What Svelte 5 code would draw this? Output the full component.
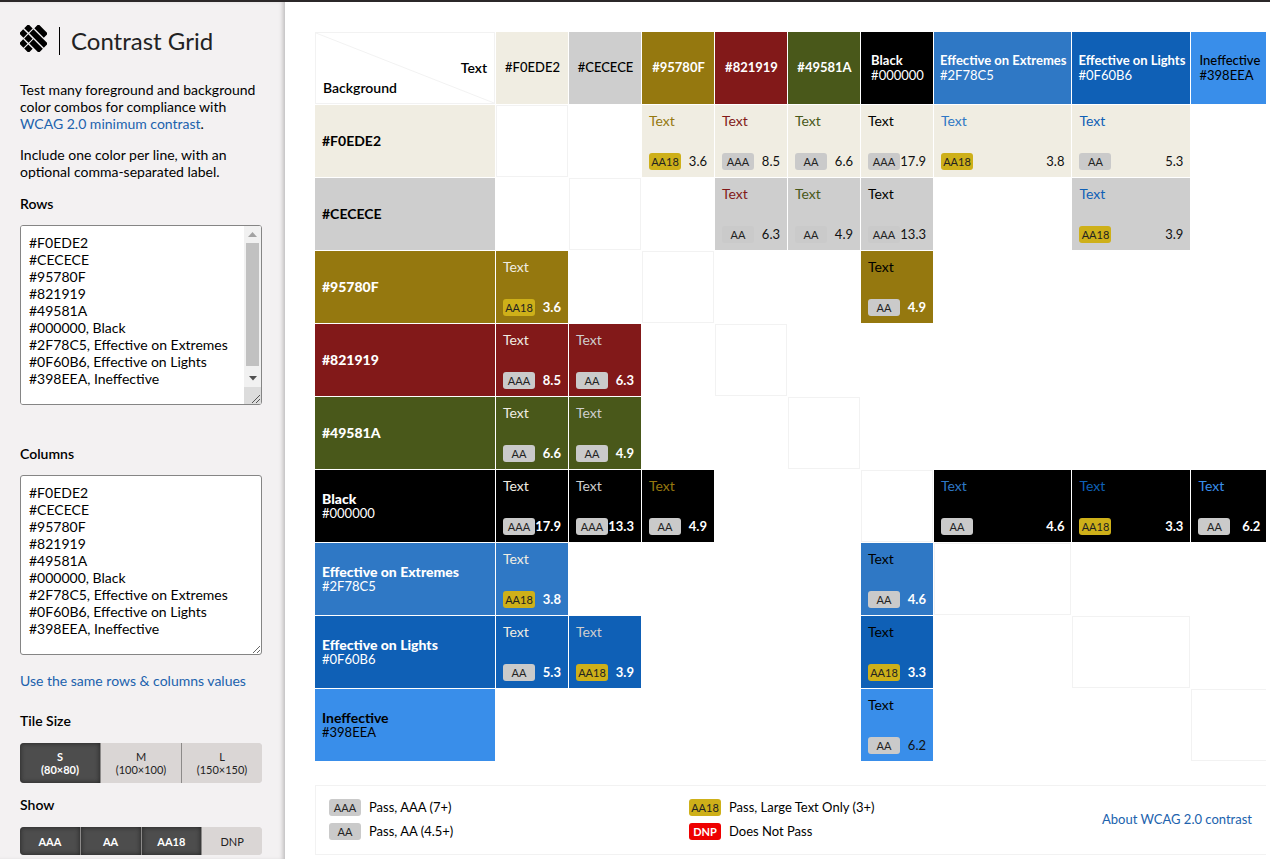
<script>
  const colors = [
    { hex: '#F0EDE2', dark: false },
    { hex: '#CECECE', dark: false },
    { hex: '#95780F', dark: true },
    { hex: '#821919', dark: true },
    { hex: '#49581A', dark: true },
    { hex: '#000000', label: 'Black', dark: true },
    { hex: '#2F78C5', label: 'Effective on Extremes', dark: true },
    { hex: '#0F60B6', label: 'Effective on Lights', dark: true },
    { hex: '#398EEA', label: 'Ineffective', dark: false }
  ];

  const source = colors.map((c) => (c.label ? `${c.hex}, ${c.label}` : c.hex)).join('\n');
  let rowsText = $state(source + '\n');
  let columnsText = $state(source);

  function luminance(hex) {
    const [r, g, b] = [1, 3, 5].map((i) => {
      const v = parseInt(hex.slice(i, i + 2), 16) / 255;
      return v <= 0.03928 ? v / 12.92 : ((v + 0.055) / 1.055) ** 2.4;
    });
    return 0.2126 * r + 0.7152 * g + 0.0722 * b;
  }

  function contrast(a, b) {
    const [hi, lo] = [luminance(a), luminance(b)].sort((x, y) => y - x);
    return Math.floor(((hi + 0.05) / (lo + 0.05)) * 10) / 10;
  }

  function grade(ratio) {
    if (ratio >= 7) return 'AAA';
    if (ratio >= 4.5) return 'AA';
    if (ratio >= 3) return 'AA18';
    return 'DNP';
  }

  const grid = colors.map((bg) => ({
    bg,
    cells: colors.map((fg) => {
      const ratio = contrast(bg.hex, fg.hex);
      return { fg, ratio, grade: grade(ratio), same: fg === bg };
    })
  }));

  const sizes = [
    { name: 'S', dims: '(80×80)' },
    { name: 'M', dims: '(100×100)' },
    { name: 'L', dims: '(150×150)' }
  ];
  let size = $state('S');
  let shown = $state({ AAA: true, AA: true, AA18: true, DNP: false });
</script>

<div class="page">
  <aside class="sidebar">
    <header class="brand">
      <svg class="logo" viewBox="0 0 28 28" aria-hidden="true">
        <path
          d="M6.5 1.2l4.5 4.5M1.2 6.5l4.5 4.5M6.5 11.8l4.5 4.5M1.2 17l4.5 4.5M6.5 22.3l4.5 4.5M17 1.2l9.8 9.8M11.8 6.5l15 15M11.8 17l9.8 9.8"
        />
      </svg>
      <h1>Contrast Grid</h1>
    </header>

    <p>
      Test many foreground and background color combos for compliance with
      <a href="#wcag">WCAG 2.0 minimum contrast</a>.
    </p>
    <p>Include one color per line, with an optional comma-separated label.</p>

    <label class="heading rows" for="rows">Rows</label>
    <div class="scroll-box">
      <textarea id="rows" spellcheck="false" bind:value={rowsText}></textarea>
      <div class="scrollbar" aria-hidden="true">
        <svg viewBox="0 0 17 17"><path class="up" d="M4 11l4.500-5 4.500 5z" /></svg>
        <div class="thumb"></div>
        <svg viewBox="0 0 17 17"><path d="M5 6h8l-4 4.500z" /></svg>
        <svg class="grip" viewBox="0 0 17 17"><path d="M8 16l8-8M12 16l4-4" /></svg>
      </div>
    </div>

    <label class="heading columns" for="columns">Columns</label>
    <textarea id="columns" spellcheck="false" bind:value={columnsText}></textarea>

    <a class="same" href="#same">Use the same rows &amp; columns values</a>

    <fieldset>
      <legend class="heading">Tile Size</legend>
      <div class="segments">
        {#each sizes as s}
          <button type="button" class:on={size === s.name} aria-pressed={size === s.name} onclick={() => (size = s.name)}>
            {s.name}<br />{s.dims}
          </button>
        {/each}
      </div>
    </fieldset>

    <fieldset>
      <legend class="heading">Show</legend>
      <div class="segments low">
        {#each Object.keys(shown) as key}
          <button type="button" class:on={shown[key]} aria-pressed={shown[key]} onclick={() => (shown[key] = !shown[key])}>{key}</button>
        {/each}
      </div>
    </fieldset>
  </aside>

  <main>
    <table>
      <thead>
        <tr>
          <td class="corner">
            <svg viewBox="0 0 180 72" preserveAspectRatio="none" aria-hidden="true"><line x1="0" y1="0" x2="180" y2="72" /></svg>
            <div class="axis text">Text</div>
            <div class="axis">Background</div>
          </td>
          {#each colors as c}
            <th scope="col" class:dark={c.dark} style="background:{c.hex}">
              <div class="name">
                {#if c.label}<strong>{c.label}</strong><span>{c.hex}</span>{:else}<strong>{c.hex}</strong>{/if}
              </div>
            </th>
          {/each}
        </tr>
      </thead>
      <tbody>
        {#each grid as row}
          <tr>
            <th scope="row" class:dark={row.bg.dark} style="background:{row.bg.hex}">
              {#if row.bg.label}<strong>{row.bg.label}</strong><span>{row.bg.hex}</span>{:else}<strong>{row.bg.hex}</strong>{/if}
            </th>
            {#each row.cells as cell}
              {#if cell.same}
                <td class="same-color"></td>
              {:else if shown[cell.grade]}
                <td style="background:{row.bg.hex}">
                  <div class="tile">
                    <div style="color:{cell.fg.hex}">Text</div>
                    <div class="result" class:dark={row.bg.dark}>
                      <span class="badge {cell.grade}">{cell.grade}</span>
                      <span>{cell.ratio.toFixed(1)}</span>
                    </div>
                  </div>
                </td>
              {:else}
                <td></td>
              {/if}
            {/each}
          </tr>
        {/each}
      </tbody>
    </table>

    <footer>
      <ul>
        <li><span class="badge AAA">AAA</span>Pass, AAA (7+)</li>
        <li><span class="badge AA18">AA18</span>Pass, Large Text Only (3+)</li>
        <li><span class="badge AA">AA</span>Pass, AA (4.5+)</li>
        <li><span class="badge DNP">DNP</span>Does Not Pass</li>
      </ul>
      <a href="#about">About WCAG 2.0 contrast</a>
    </footer>
  </main>
</div>

<style>
  :global(body) {
    margin: 0;
    overflow: hidden;
  }

  .page {
    display: flex;
    box-sizing: border-box;
    height: 100vh;
    overflow: hidden;
    border-top: 2px solid #2b2829;
    background: #fff;
    color: #000;
    font: 14px/17px Lato, sans-serif;
  }

  a {
    color: #2062ad;
    text-decoration: none;
  }

  .sidebar {
    flex: none;
    box-sizing: border-box;
    width: 285px;
    padding: 23px 23px 0 20px;
    overflow: hidden;
    background: #f3f1f2;
    box-shadow: inset -4px 0 4px -2px #bdbbbc;
  }

  .brand {
    display: flex;
    gap: 12px;
    height: 56px;
  }

  .logo {
    flex: none;
    width: 27px;
    height: 27px;
  }

  .logo path {
    stroke: #000;
    stroke-width: 6;
  }

  h1 {
    align-self: flex-start;
    margin: 2px 0 0;
    padding-left: 11px;
    border-left: 1px solid #000;
    color: #222;
    font-size: 24px;
    font-weight: 400;
    line-height: 28px;
  }

  p {
    margin: 0 0 14px;
  }

  .heading {
    display: block;
    padding: 0;
    margin-bottom: 12px;
    font-weight: 600;
    line-height: 18px;
  }

  .heading.rows {
    margin-top: 15px;
  }

  .heading.columns {
    margin-top: 40px;
  }

  legend.heading {
    margin-bottom: 13px;
  }

  textarea {
    display: block;
    box-sizing: border-box;
    width: 100%;
    height: 180px;
    padding: 8px;
    border: 1px solid #858585;
    border-radius: 3px;
    background: #fff;
    color: #000;
    font: 14px/17px Lato, sans-serif;
    resize: both;
  }

  .scroll-box {
    position: relative;
  }

  .scrollbar {
    position: absolute;
    inset: 1px 1px 1px auto;
    display: flex;
    flex-direction: column;
    width: 17px;
    background: #f1f1f1;
    border-radius: 0 2px 2px 0;
    overflow: hidden;
    pointer-events: none;
  }

  .scrollbar svg {
    flex: none;
    width: 17px;
    height: 17px;
    fill: #505050;
  }

  .scrollbar .up {
    fill: #a3a3a3;
  }

  .scrollbar .grip {
    background: #dcdcdc;
    stroke: #555;
    stroke-width: 1;
  }

  .thumb {
    flex: 1;
    margin: 0 2px 4px;
    background: #c1c1c1;
  }

  .same {
    display: block;
    margin: 17px 0 23px;
  }

  fieldset {
    min-width: 0;
    margin: 0 0 13px;
    padding: 0;
    border: 0;
  }

  .segments {
    display: flex;
    overflow: hidden;
    border-radius: 4px;
    background: #dad6d5;
  }

  .segments button {
    flex: 1 1 0;
    height: 40px;
    padding: 0;
    border: 0;
    border-right: 1px solid #8c8a89;
    background: #dad6d5;
    color: #222;
    font: 11px/13px Lato, sans-serif;
  }

  .segments.low button {
    height: 28px;
  }

  .segments button:last-child {
    border-right: 0;
  }

  .segments button.on {
    background: #4d4d4d;
    color: #fff;
    font-weight: 700;
    box-shadow: inset 0 0 5px #222;
  }

  main {
    flex: 1;
    min-width: 0;
    margin: 30px 4px 0 30px;
    overflow: hidden;
    font-size: 13px;
  }

  table {
    margin: -1px;
    border-spacing: 1px;
    line-height: 15px;
  }

  td,
  th {
    box-sizing: border-box;
    min-width: 72px;
    height: 72px;
    padding: 0 7px;
    text-align: left;
    font-weight: 400;
    white-space: nowrap;
  }

  th:last-child,
  td:last-child {
    min-width: 76px;
  }

  th[scope='row'],
  .corner {
    width: 180px;
    min-width: 180px;
  }

  tbody th {
    padding-bottom: 1px;
  }

  thead th {
    padding: 0 5px 1px 6px;
    text-align: center;
  }

  .name {
    display: inline-block;
    text-align: left;
    vertical-align: top;
  }

  th strong,
  th span {
    display: block;
  }

  th strong {
    font-weight: 500;
  }

  th.dark strong {
    font-weight: 700;
  }

  tbody th strong {
    font-size: 14px;
    font-weight: 700;
  }

  tbody th.dark strong {
    font-weight: 900;
  }

  .dark {
    color: #fff;
  }

  .corner {
    position: relative;
    padding-bottom: 5px;
    border: 1px solid #f2f2f2;
    font-size: 14px;
    font-weight: 600;
    line-height: 20px;
    vertical-align: bottom;
  }

  .corner svg {
    position: absolute;
    inset: 0;
    width: 100%;
    height: 100%;
  }

  .corner line {
    stroke: #f2f2f2;
    stroke-width: 1;
  }

  .axis {
    position: relative;
  }

  .axis.text {
    text-align: right;
  }

  .same-color {
    border: 1px solid #f2f2f2;
  }

  .tile {
    display: flex;
    flex-direction: column;
    justify-content: space-between;
    height: 58px;
    font-size: 14px;
    line-height: 17px;
  }

  .result {
    display: flex;
    align-items: center;
    justify-content: space-between;
    color: #111;
    font-size: 13px;
  }

  .result.dark {
    color: #fff;
    font-weight: 700;
  }

  .badge {
    flex: none;
    width: 32px;
    border-radius: 3px;
    background: #cacaca;
    color: #222;
    font-size: 11px;
    font-weight: 400;
    line-height: 17px;
    text-align: center;
  }

  .badge.AA18 {
    background: #ceb019;
  }

  .badge.DNP {
    background: #ee0000;
    color: #fff;
    font-weight: 700;
  }

  footer {
    display: flex;
    align-items: center;
    margin-top: 24px;
    padding: 9px 14px 11px 13px;
    border: 1px solid #f2f2f2;
    border-right: 0;
  }

  footer ul {
    flex: 1;
    display: grid;
    grid-template-columns: 360px 1fr;
    margin: 0;
    padding: 0;
    list-style: none;
  }

  footer li {
    display: flex;
    align-items: center;
    gap: 8px;
    line-height: 24px;
  }
</style>
